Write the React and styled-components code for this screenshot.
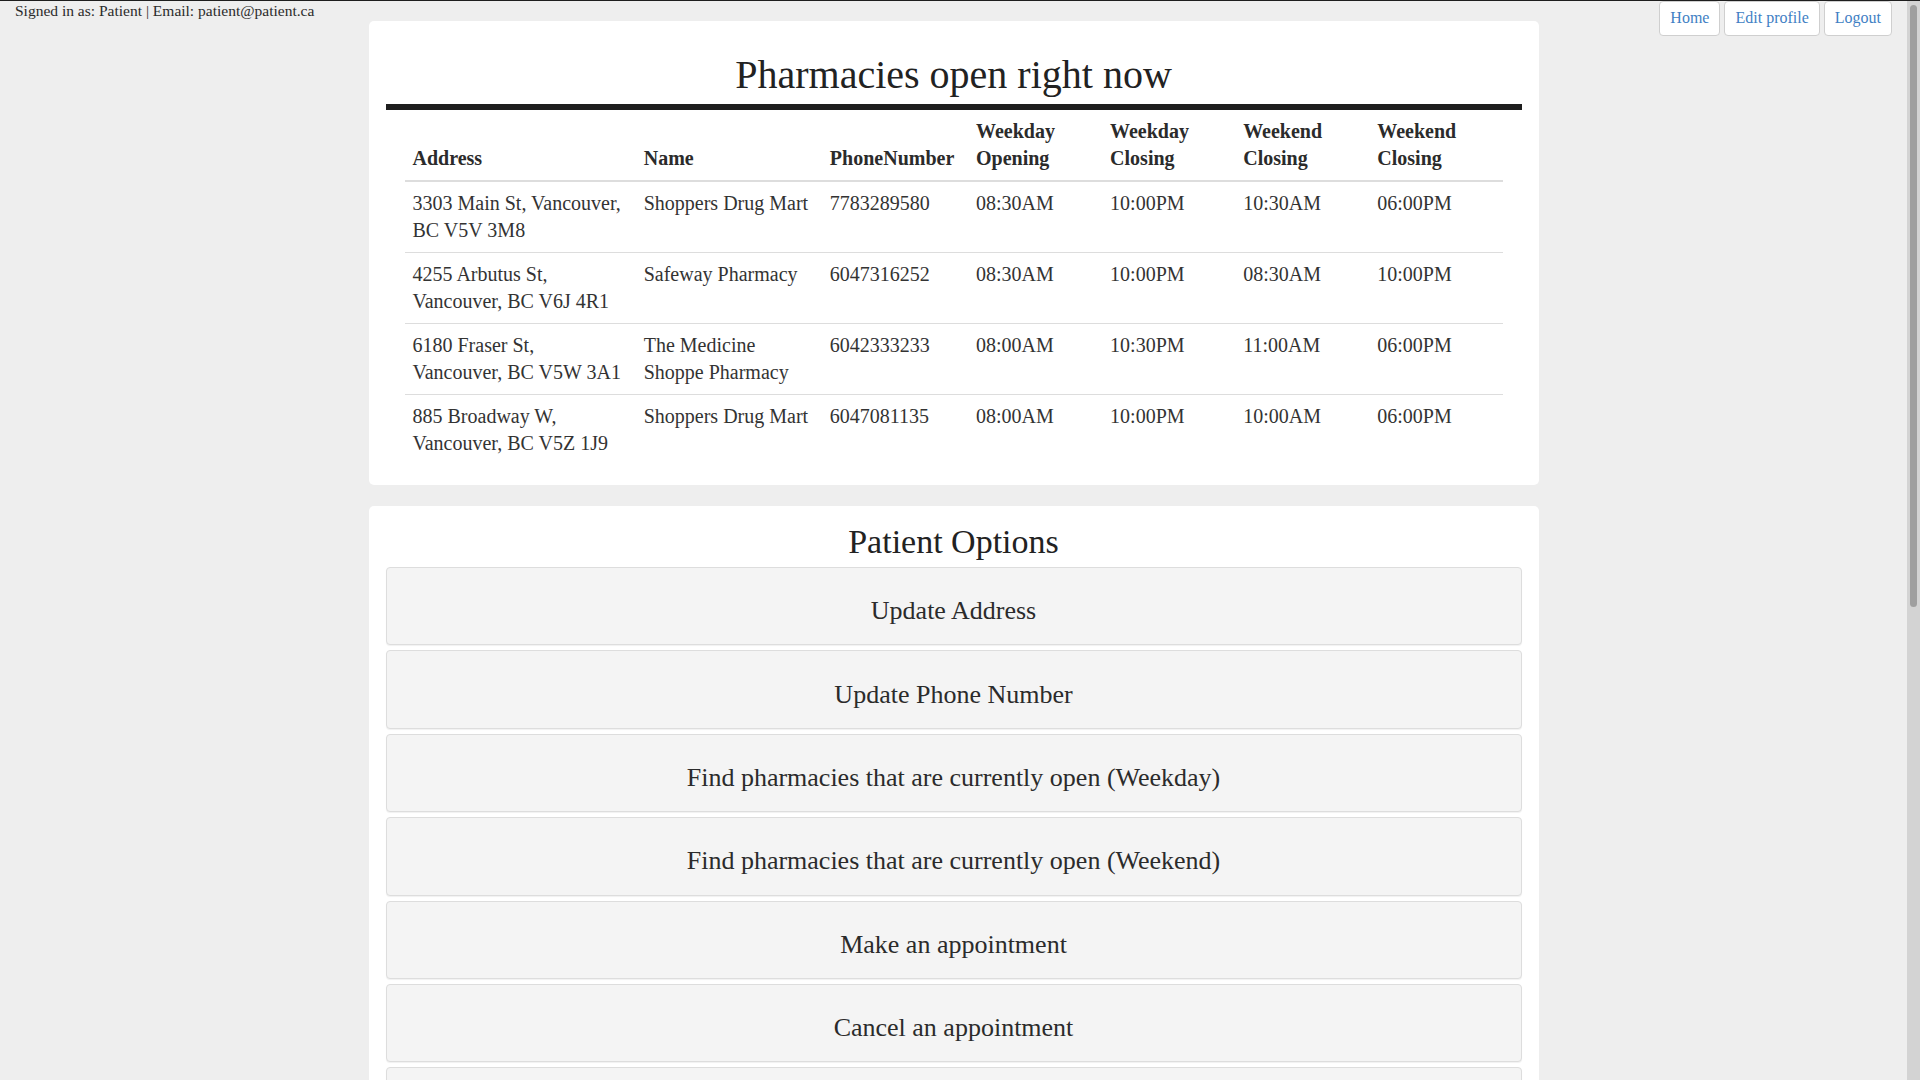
import React from 'react';
import styled, { createGlobalStyle } from 'styled-components';

const GlobalStyle = createGlobalStyle`
  html {
    overflow: hidden;
  }
  body {
    margin: 0;
    background: #eeeeee;
    border-top: 1px solid #1e1e1e;
    font-family: "Liberation Serif", "Times New Roman", serif;
    color: #333333;
  }
`;

const pharmacies = [
  { address: '3303 Main St, Vancouver, BC V5V 3M8', name: 'Shoppers Drug Mart', phone: '7783289580', wdOpen: '08:30AM', wdClose: '10:00PM', weOpen: '10:30AM', weClose: '06:00PM' },
  { address: '4255 Arbutus St, Vancouver, BC V6J 4R1', name: 'Safeway Pharmacy', phone: '6047316252', wdOpen: '08:30AM', wdClose: '10:00PM', weOpen: '08:30AM', weClose: '10:00PM' },
  { address: '6180 Fraser St, Vancouver, BC V5W 3A1', name: 'The Medicine Shoppe Pharmacy', phone: '6042333233', wdOpen: '08:00AM', wdClose: '10:30PM', weOpen: '11:00AM', weClose: '06:00PM' },
  { address: '885 Broadway W, Vancouver, BC V5Z 1J9', name: 'Shoppers Drug Mart', phone: '6047081135', wdOpen: '08:00AM', wdClose: '10:00PM', weOpen: '10:00AM', weClose: '06:00PM' },
];

const columns = [
  { label: 'Address', width: 231 },
  { label: 'Name', width: 186 },
  { label: 'PhoneNumber', width: 146 },
  { label: 'Weekday Opening', width: 134 },
  { label: 'Weekday Closing', width: 133 },
  { label: 'Weekend Closing', width: 134 },
  { label: 'Weekend Closing', width: 133 },
];

const options = [
  'Update Address',
  'Update Phone Number',
  'Find pharmacies that are currently open (Weekday)',
  'Find pharmacies that are currently open (Weekend)',
  'Make an appointment',
  'Cancel an appointment',
  'View my appointments',
  'View my prescriptions',
  'View my medical records',
  'Find a doctor',
  'Find a pharmacy by name',
  'Find doctors by specialty',
  'View doctor availability',
  'Find pharmacies near me',
  'View appointment history',
  'Delete account',
];

const App = () => (
  <>
    <GlobalStyle />
    <Frame>
      <Viewport>
        <TopBar>
          <SignedIn>Signed in as: Patient | Email: patient@patient.ca</SignedIn>
          <Nav>
            <NavButton href="#">Home</NavButton>
            <NavButton href="#">Edit profile</NavButton>
            <NavButton href="#">Logout</NavButton>
          </Nav>
        </TopBar>

        <Page>
          <Card>
            <Title>Pharmacies open right now</Title>
            <TableWrap>
              <Table>
                <colgroup>
                  {columns.map((col, i) => (
                    <col key={i} style={{ width: col.width }} />
                  ))}
                </colgroup>
                <thead>
                  <tr>
                    {columns.map((col, i) => (
                      <Th key={i}>{col.label}</Th>
                    ))}
                  </tr>
                </thead>
                <tbody>
                  {pharmacies.map((p, i) => (
                    <tr key={i}>
                      <Td>{p.address}</Td>
                      <Td>{p.name}</Td>
                      <Td>{p.phone}</Td>
                      <Td>{p.wdOpen}</Td>
                      <Td>{p.wdClose}</Td>
                      <Td>{p.weOpen}</Td>
                      <Td>{p.weClose}</Td>
                    </tr>
                  ))}
                </tbody>
              </Table>
            </TableWrap>
          </Card>

          <Card>
            <Subtitle>Patient Options</Subtitle>
            <OptionList>
              {options.map((label, i) => (
                <OptionButton key={i}>{label}</OptionButton>
              ))}
            </OptionList>
          </Card>
        </Page>
      </Viewport>
      <ScrollTrack>
        <ScrollThumb />
      </ScrollTrack>
    </Frame>
  </>
);

const Frame = styled.div`
  display: flex;
  height: calc(100vh - 1px);
  overflow: hidden;
`;

const Viewport = styled.div`
  flex: 1;
  min-width: 0;
  overflow: hidden;
`;

const ScrollTrack = styled.div`
  width: 13px;
  flex-shrink: 0;
  box-sizing: border-box;
  padding: 4px 3px 0 3px;
  background: #d3d3d3;
`;

const ScrollThumb = styled.div`
  height: 602px;
  background: #9f9f9f;
  border-radius: 4px;
`;

const TopBar = styled.header`
  display: flex;
  justify-content: space-between;
  align-items: flex-start;
  height: 20px;
  padding: 0 15px 0 15px;
`;

const SignedIn = styled.div`
  font-size: 15.5px;
  line-height: 20px;
  color: #2b2b2b;
`;

const Nav = styled.nav`
  display: flex;
  gap: 4px;
  position: relative;
  z-index: 1;
`;

const NavButton = styled.a`
  display: inline-block;
  padding: 6px 10px 7px;
  font-size: 16px;
  line-height: 20px;
  color: #3f7fc4;
  text-decoration: none;
  background: #ffffff;
  border: 1px solid #cfcfcf;
  border-radius: 4px;
`;

const Page = styled.main`
  width: 1170px;
  margin: 0 auto;
  display: flex;
  flex-direction: column;
  gap: 21px;
`;

const Card = styled.section`
  background: #ffffff;
  border-radius: 5px;
  padding: 0 17px 20px;
`;

const Title = styled.h1`
  margin: 0;
  padding: 32px 0 7px;
  font-size: 40px;
  line-height: 44px;
  font-weight: normal;
  text-align: center;
  color: #222222;
  border-bottom: 6px solid #1e1e1e;
`;

const TableWrap = styled.div`
  padding: 0 19px;
`;

const Table = styled.table`
  width: 100%;
  table-layout: fixed;
  border-collapse: collapse;
  font-size: 20px;
  line-height: 27px;
`;

const Th = styled.th`
  padding: 8px;
  text-align: left;
  vertical-align: bottom;
  font-weight: bold;
  color: #2b2b2b;
  border-bottom: 2px solid #dddddd;
`;

const Td = styled.td`
  padding: 8px;
  vertical-align: top;
  color: #333333;
  border-top: 1px solid #dddddd;

  tr:first-child > & {
    border-top: none;
  }
`;

const Subtitle = styled.h2`
  margin: 0;
  padding: 17px 0 6px;
  font-size: 34px;
  line-height: 38px;
  font-weight: normal;
  text-align: center;
  color: #222222;
`;

const OptionList = styled.div`
  display: flex;
  flex-direction: column;
  gap: 5px;
`;

const OptionButton = styled.button`
  height: 78.4px;
  padding: 10px 0 0;
  font-family: inherit;
  font-size: 26px;
  color: #2b2b2b;
  background: #f4f4f4;
  border: 1px solid #dddddd;
  border-radius: 4px;
  box-shadow: 0 1px 1px rgba(0, 0, 0, 0.06);
  cursor: pointer;
`;

export default App;
